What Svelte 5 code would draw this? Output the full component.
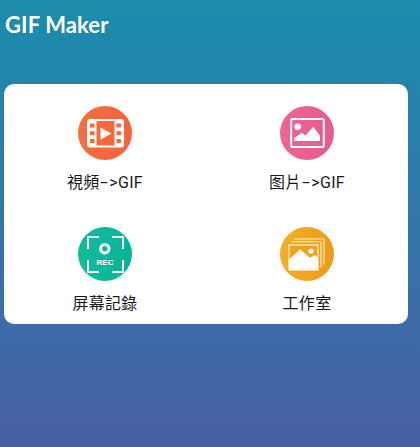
<script>
  const items = [
    { name: '視頻', suffix: true, cls: 'orange', kind: 'video' },
    { name: '图片', suffix: true, cls: 'pink', kind: 'image' },
    { name: '屏幕記錄', suffix: false, cls: 'green', kind: 'rec' },
    { name: '工作室', suffix: false, cls: 'amber', kind: 'studio' }
  ];
</script>

<div class="page">
  <header class="bar">GIF Maker</header>
  <main class="card">
    {#each items as item}
      <div class="cell">
        <div class="circle {item.cls}">
          {#if item.kind === 'video'}
            <svg viewBox="0 0 54 54" width="54" height="54">
              <rect x="10" y="14" width="35" height="26.5" rx="2" fill="none" stroke="#fff" stroke-width="2" />
              <rect x="10" y="14" width="8.5" height="26.5" fill="#fff" />
              <rect x="36.5" y="14" width="8.5" height="26.5" fill="#fff" />
              <g fill="#f4693a">
                <rect x="12" y="17.5" width="4.6" height="4" rx=".6" />
                <rect x="12" y="25.2" width="4.6" height="4" rx=".6" />
                <rect x="12" y="33" width="4.6" height="4" rx=".6" />
                <rect x="38.4" y="17.5" width="4.6" height="4" rx=".6" />
                <rect x="38.4" y="25.2" width="4.6" height="4" rx=".6" />
                <rect x="38.4" y="33" width="4.6" height="4" rx=".6" />
              </g>
              <path d="M22.5 21.5 L33.5 27.5 L22.5 33.8 Z" fill="#fff" />
            </svg>
          {:else if item.kind === 'image'}
            <svg viewBox="0 0 54 54" width="54" height="54">
              <rect x="11.2" y="13" width="32.6" height="28" rx="1.5" fill="none" stroke="#fff" stroke-width="2" />
              <circle cx="17.7" cy="20.7" r="3.3" fill="#fff" />
              <path d="M14.3 35 V32 L21.7 26.7 L25.5 29.5 L33.3 20.7 L40 30 V35 Z" fill="#fff" />
            </svg>
          {:else if item.kind === 'rec'}
            <svg viewBox="0 0 54 54" width="54" height="54">
              <path d="M21 10 H10 V22 M34 10 H45 V22 M10 33 V45 H21 M45 33 V45 H34" fill="none" stroke="#fff" stroke-width="2" />
              <circle cx="26.8" cy="21.7" r="4.2" fill="none" stroke="#fff" stroke-width="3" />
              <text x="27" y="38.4" text-anchor="middle" class="rec">REC</text>
            </svg>
          {:else}
            <svg viewBox="0 0 54 54" width="54" height="54">
              <path d="M14.5 12 H44 V37.5" fill="none" stroke="#fff" stroke-width="1" opacity=".9" />
              <path d="M11.5 14.7 H41 V40.5" fill="none" stroke="#fff" stroke-width="1" opacity=".9" />
              <rect x="8.5" y="17.5" width="30" height="26" fill="#fff" />
              <path d="M9.5 32.3 L20 22.3 L30 30.7 L35 28 L37.5 30.5 V18.5 H9.5 Z" fill="#efa31f" />
              <circle cx="31" cy="24" r="2.6" fill="#fff" />
            </svg>
          {/if}
        </div>
        <div class="label">{item.name}{#if item.suffix}<span class="dash">-</span>&gt;GIF{/if}</div>
      </div>
    {/each}
  </main>
</div>

<style>
  :global(body) {
    margin: 0;
  }
  .page {
    width: 420px;
    height: 447px;
    box-sizing: border-box;
    padding: 0 12px 0 4px;
    background: linear-gradient(180deg, #1a8dab 0%, #4a5fa5 100%);
    font-family: Roboto, "Noto Sans CJK TC", "Noto Sans CJK SC", sans-serif;
    overflow: hidden;
  }
  .bar {
    height: 84px;
    box-sizing: border-box;
    padding: 11px 0 0 1px;
    color: #fff;
    font-family: Lato, "Open Sans", sans-serif;
    font-weight: 700;
    font-size: 22px;
    line-height: 28px;
    letter-spacing: 0.1px;
  }
  .card {
    height: 240px;
    box-sizing: border-box;
    padding-top: 22px;
    background: #fff;
    border-radius: 10px;
    display: grid;
    grid-template-columns: 1fr 1fr;
    grid-auto-rows: 121px;
  }
  .cell {
    display: flex;
    flex-direction: column;
    align-items: center;
  }
  .circle {
    width: 54px;
    height: 54px;
    border-radius: 50%;
    display: flex;
  }
  .orange { background: linear-gradient(90deg, #f56f3d, #f4633a); }
  .pink { background: linear-gradient(90deg, #ef6494, #e65a8e); }
  .green { background: linear-gradient(90deg, #14bb9d, #05b598); }
  .amber { background: linear-gradient(90deg, #f5ae28, #ea9c16); }
  .rec {
    font-family: "Liberation Sans", sans-serif;
    font-weight: 700;
    font-size: 8px;
    fill: #fff;
  }
  .label {
    margin-top: 11px;
    font-size: 16px;
    line-height: 24px;
    color: #1a1a1a;
    letter-spacing: 0.3px;
  }
  .dash {
    display: inline-block;
    margin: 0 3px 0 2px;
    transform: scaleX(1.7);
  }
</style>
